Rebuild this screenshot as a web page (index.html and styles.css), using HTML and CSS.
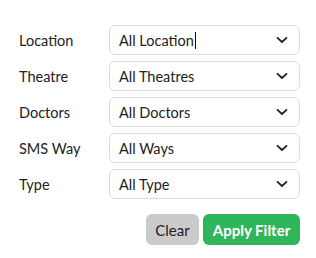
FILE: index.html
```html
<!DOCTYPE html>
<html>
<head>
<meta charset="utf-8">
<link rel="stylesheet" href="styles.css">
</head>
<body>
<form class="filters">
  <div class="grid">
    <label class="lbl">Location</label>
    <div class="select"><span class="val">All Location<span class="caret"></span></span><svg class="chev" viewBox="0 0 12 8" width="12" height="8"><path d="M1.5 1.8 L6 6 L10.5 1.8" fill="none" stroke="#222" stroke-width="1.8" stroke-linecap="round" stroke-linejoin="round"/></svg></div>
    <label class="lbl">Theatre</label>
    <div class="select"><span class="val">All Theatres</span><svg class="chev" viewBox="0 0 12 8" width="12" height="8"><path d="M1.5 1.8 L6 6 L10.5 1.8" fill="none" stroke="#222" stroke-width="1.8" stroke-linecap="round" stroke-linejoin="round"/></svg></div>
    <label class="lbl">Doctors</label>
    <div class="select"><span class="val">All Doctors</span><svg class="chev" viewBox="0 0 12 8" width="12" height="8"><path d="M1.5 1.8 L6 6 L10.5 1.8" fill="none" stroke="#222" stroke-width="1.8" stroke-linecap="round" stroke-linejoin="round"/></svg></div>
    <label class="lbl">SMS Way</label>
    <div class="select"><span class="val">All Ways</span><svg class="chev" viewBox="0 0 12 8" width="12" height="8"><path d="M1.5 1.8 L6 6 L10.5 1.8" fill="none" stroke="#222" stroke-width="1.8" stroke-linecap="round" stroke-linejoin="round"/></svg></div>
    <label class="lbl">Type</label>
    <div class="select"><span class="val">All Type</span><svg class="chev" viewBox="0 0 12 8" width="12" height="8"><path d="M1.5 1.8 L6 6 L10.5 1.8" fill="none" stroke="#222" stroke-width="1.8" stroke-linecap="round" stroke-linejoin="round"/></svg></div>
  </div>
  <div class="actions">
    <button type="button" class="btn clear">Clear</button>
    <button type="button" class="btn apply">Apply Filter</button>
  </div>
</form>
</body>
</html>
```
FILE: styles.css
```css
html, body {
  margin: 0;
  padding: 0;
  background: #fff;
}
body {
  font-family: "Lato", "Open Sans", sans-serif;
  font-size: 14.5px;
  color: #222;
}
.filters {
  padding: 25px 16px 0 19px;
  width: 281px;
}
.grid {
  display: grid;
  grid-template-columns: 90px 191px;
  row-gap: 6px;
  align-items: center;
}
.lbl {
  font-size: 14.5px;
  color: #222;
}
.select {
  height: 30px;
  box-sizing: border-box;
  border: 1px solid #dcdcdc;
  border-radius: 6px;
  display: flex;
  align-items: center;
  justify-content: space-between;
  padding: 0 11px 0 9px;
}
.val {
  display: flex;
  align-items: center;
}
.caret {
  display: inline-block;
  width: 1px;
  height: 17px;
  background: #111;
  margin-left: 1px;
}
.chev {
  display: block;
}
.actions {
  display: flex;
  justify-content: flex-end;
  gap: 4px;
  margin-top: 15px;
}
.btn {
  font-family: inherit;
  font-size: 15px;
  border: none;
  border-radius: 6px;
  height: 31px;
  padding: 0 4px;
  cursor: pointer;
}
.clear {
  background: #cbcbcb;
  color: #222;
  width: 53px;
}
.apply {
  background: #2fb65b;
  color: #fff;
  font-weight: 700;
  width: 97px;
}
```
